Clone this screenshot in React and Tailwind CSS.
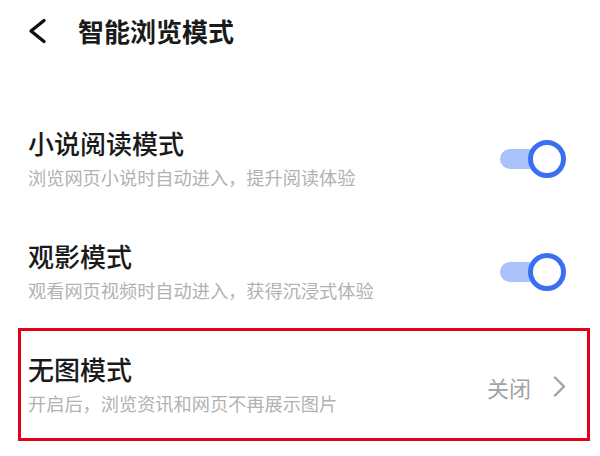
import React from "react";

const font = { fontFamily: '"Noto Sans CJK SC", "Noto Sans", sans-serif' };

function Toggle() {
  return (
    <div className="relative w-[66px] h-[38px] shrink-0">
      <div className="absolute left-0 top-[9px] w-[50px] h-[20px] rounded-full bg-[#a9c3fa]" />
      <div className="absolute right-0 top-0 w-[38px] h-[38px] rounded-full border-[5px] border-[#3a6ff2] bg-white" />
    </div>
  );
}

function Row({ title, desc, right, boxed }) {
  return (
    <div
      className={
        "flex items-center h-[113px] pl-[10px] pr-[24px] " +
        (boxed ? "outline-3 outline-[#e3001b] -outline-offset-3" : "")
      }
    >
      <div className="flex-1 flex flex-col gap-[5px]">
        <div className="text-[26px] leading-[32px] font-medium text-[#1a1a1a]">{title}</div>
        <div className="text-[18.2px] leading-[26px] text-[#b2b2b2]">{desc}</div>
      </div>
      {right}
    </div>
  );
}

export default function App() {
  return (
    <div className="w-[600px] h-[456px] bg-white overflow-hidden" style={font}>
      <div className="flex items-center h-[62px] pl-[27px]">
        <svg width="20" height="26" viewBox="0 0 20 26" className="shrink-0">
          <polyline
            points="17,2.5 4,13 17,23.5"
            fill="none"
            stroke="#111"
            strokeWidth="3.4"
            strokeLinecap="round"
            strokeLinejoin="round"
          />
        </svg>
        <div className="ml-[31px] text-[26px] leading-[32px] font-bold text-[#1a1a1a]">智能浏览模式</div>
      </div>
      <div className="mt-[40px] pl-[18px] pr-[10px]">
        <Row title="小说阅读模式" desc="浏览网页小说时自动进入，提升阅读体验" right={<Toggle />} />
        <Row title="观影模式" desc="观看网页视频时自动进入，获得沉浸式体验" right={<Toggle />} />
        <Row
          boxed
          title="无图模式"
          desc="开启后，浏览资讯和网页不再展示图片"
          right={
            <div className="flex items-center gap-[22px] mt-[4px]">
              <span className="text-[22px] leading-[28px] text-[#a3a3a3]">关闭</span>
              <svg width="13" height="21" viewBox="0 0 13 21">
                <polyline
                  points="2,1.5 11,10.5 2,19.5"
                  fill="none"
                  stroke="#a3a3a3"
                  strokeWidth="2.4"
                  strokeLinecap="round"
                  strokeLinejoin="round"
                />
              </svg>
            </div>
          }
        />
      </div>
    </div>
  );
}
